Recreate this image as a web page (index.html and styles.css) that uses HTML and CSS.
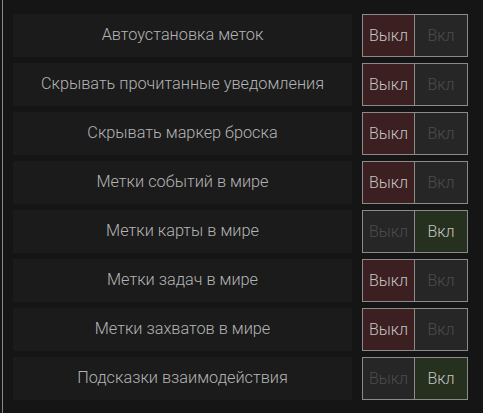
FILE: index.html
```html
<!DOCTYPE html>
<html lang="ru">
<head>
  <meta charset="UTF-8">
  <title>Настройки меток</title>
  <link rel="stylesheet" href="styles.css">
</head>
<body>
  <div class="panel">
    <div class="setting">
      <div class="label">Автоустановка меток</div>
      <div class="toggle off"><span class="opt opt-off">Выкл</span><span class="opt opt-on">Вкл</span></div>
    </div>
    <div class="setting">
      <div class="label">Скрывать прочитанные уведомления</div>
      <div class="toggle off"><span class="opt opt-off">Выкл</span><span class="opt opt-on">Вкл</span></div>
    </div>
    <div class="setting">
      <div class="label">Скрывать маркер броска</div>
      <div class="toggle off"><span class="opt opt-off">Выкл</span><span class="opt opt-on">Вкл</span></div>
    </div>
    <div class="setting">
      <div class="label">Метки событий в мире</div>
      <div class="toggle off"><span class="opt opt-off">Выкл</span><span class="opt opt-on">Вкл</span></div>
    </div>
    <div class="setting">
      <div class="label">Метки карты в мире</div>
      <div class="toggle on"><span class="opt opt-off">Выкл</span><span class="opt opt-on">Вкл</span></div>
    </div>
    <div class="setting">
      <div class="label">Метки задач в мире</div>
      <div class="toggle off"><span class="opt opt-off">Выкл</span><span class="opt opt-on">Вкл</span></div>
    </div>
    <div class="setting">
      <div class="label">Метки захватов в мире</div>
      <div class="toggle off"><span class="opt opt-off">Выкл</span><span class="opt opt-on">Вкл</span></div>
    </div>
    <div class="setting">
      <div class="label">Подсказки взаимодействия</div>
      <div class="toggle on"><span class="opt opt-off">Выкл</span><span class="opt opt-on">Вкл</span></div>
    </div>
  </div>
</body>
</html>
```

FILE: styles.css
```css
html, body {
  margin: 0;
  padding: 0;
  height: 100%;
  background-color: #151515;
  font-family: Roboto, 'Liberation Sans', sans-serif;
  font-weight: 300;
  color: #b4b4b4;
}

.panel {
  margin-left: 2px;
  min-height: 100%;
  box-sizing: border-box;
  border-left: 1px solid #8a8a8a;
  padding: 14px 15px 0 10px;
  display: flex;
  flex-direction: column;
  gap: 6px;
}

.setting {
  display: grid;
  grid-template-columns: 339px 106px;
  column-gap: 10px;
  height: 43px;
}

.label {
  background-color: #1b1b1b;
  display: flex;
  align-items: center;
  justify-content: center;
  font-size: 16.3px;
  padding-bottom: 3px;
}

.toggle {
  display: grid;
  grid-template-columns: 1fr 1fr;
  border: 1px solid #8a8a8a;
  background-color: #262626;
}

.opt {
  display: flex;
  align-items: center;
  justify-content: center;
  font-size: 16px;
  color: #4c4c4c;
}

.opt-off {
  border-right: 1px solid #8a8a8a;
}

.toggle.off .opt-off {
  background-color: #3c1f20;
  color: #c4c4c4;
}

.toggle.on .opt-on {
  background-color: #25301f;
  color: #c4c4c4;
}
```
